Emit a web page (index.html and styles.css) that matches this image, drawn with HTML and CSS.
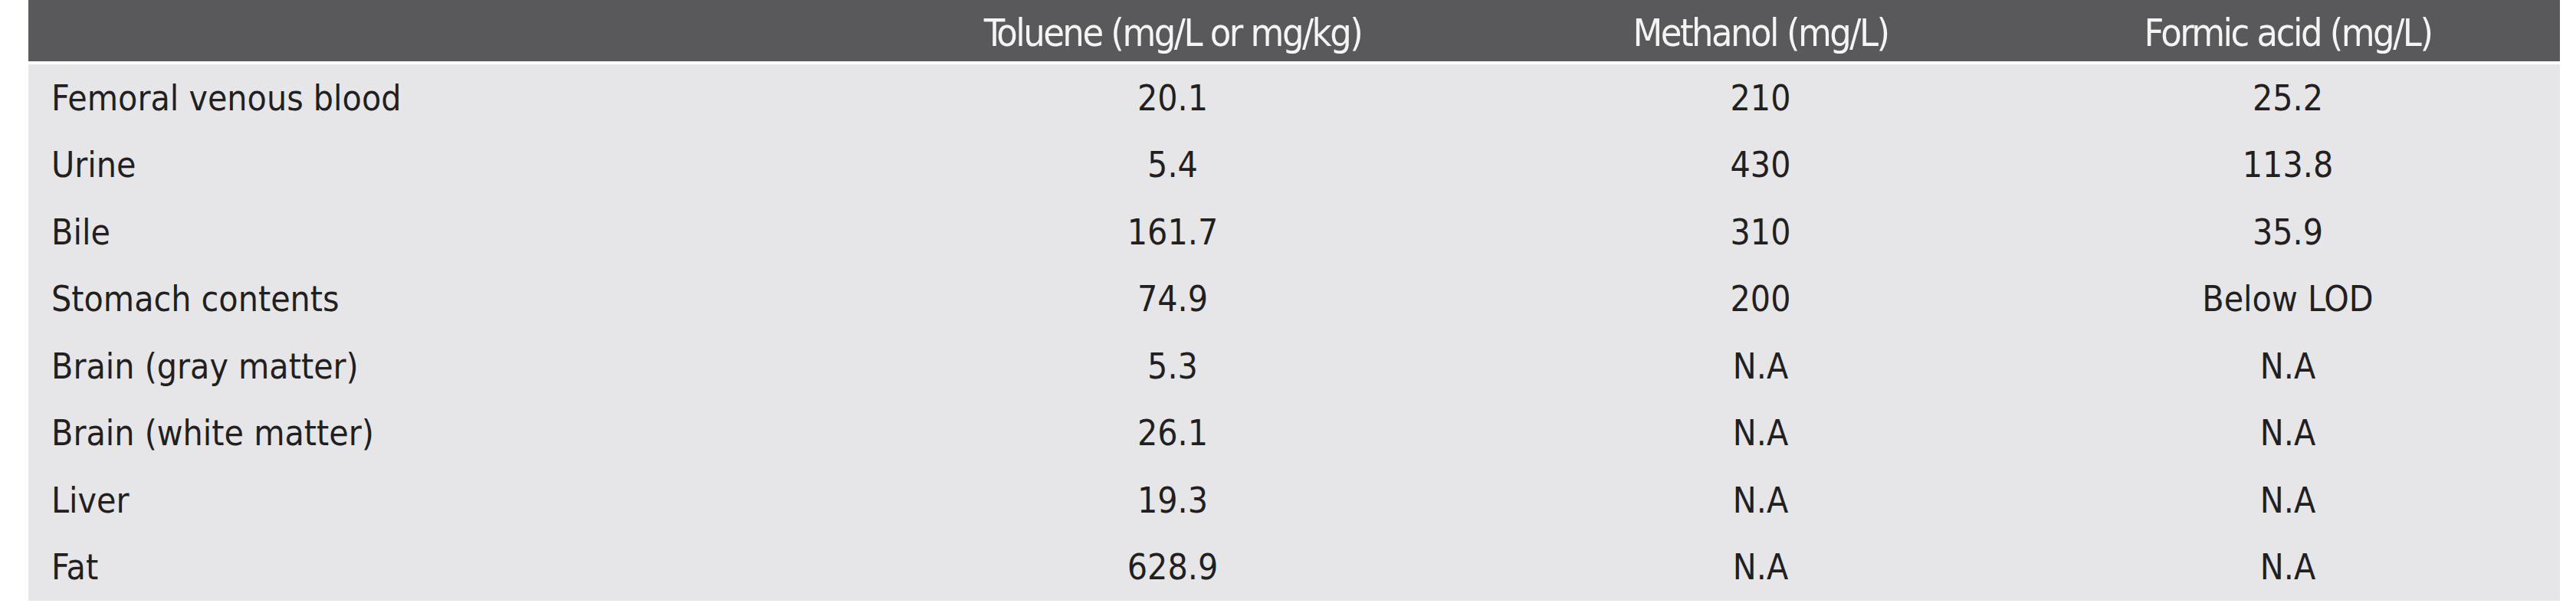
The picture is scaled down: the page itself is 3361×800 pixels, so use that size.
FILE: index.html
```html
<!DOCTYPE html>
<html>
<head>
<meta charset="utf-8">
<link rel="stylesheet" href="styles.css">
</head>
<body>
<table class="data">
  <colgroup>
    <col class="c-label">
    <col class="c-tol">
    <col class="c-meth">
    <col class="c-form">
  </colgroup>
  <thead>
    <tr class="head-row">
      <th class="label"></th>
      <th>Toluene (mg/L or mg/kg)</th>
      <th>Methanol (mg/L)</th>
      <th>Formic acid (mg/L)</th>
    </tr>
  </thead>
  <tbody>
    <tr><td class="label">Femoral venous blood</td><td>20.1</td><td>210</td><td>25.2</td></tr>
    <tr><td class="label">Urine</td><td>5.4</td><td>430</td><td>113.8</td></tr>
    <tr><td class="label">Bile</td><td>161.7</td><td>310</td><td>35.9</td></tr>
    <tr><td class="label">Stomach contents</td><td>74.9</td><td>200</td><td>Below LOD</td></tr>
    <tr><td class="label">Brain (gray matter)</td><td>5.3</td><td>N.A</td><td>N.A</td></tr>
    <tr><td class="label">Brain (white matter)</td><td>26.1</td><td>N.A</td><td>N.A</td></tr>
    <tr><td class="label">Liver</td><td>19.3</td><td>N.A</td><td>N.A</td></tr>
    <tr><td class="label">Fat</td><td>628.9</td><td>N.A</td><td>N.A</td></tr>
  </tbody>
</table>
</body>
</html>
```
FILE: styles.css
```css
html, body {
  margin: 0;
  padding: 0;
  background: #ffffff;
}

body {
  padding-left: 37px;
  font-family: "DejaVu Sans Condensed", "DejaVu Sans", sans-serif;
  font-stretch: semi-condensed;
}

.data {
  border-collapse: collapse;
  table-layout: fixed;
  width: 3303px;
}

.c-label { width: 1059px; }
.c-tol { width: 868px; }
.c-meth { width: 666px; }
.c-form { width: 710px; }

.head-row {
  height: 82px;
}

.data th {
  padding: 5px 0 0 0;
  background: #59595b;
  color: #f4f4f4;
  font-weight: normal;
  font-size: 50px;
  letter-spacing: -2.5px;
  text-align: center;
  vertical-align: middle;
  border-bottom: 4px solid #ffffff;
  white-space: nowrap;
}

.data td {
  height: 87.5px;
  padding: 0;
  background: #e6e6e8;
  color: #231f20;
  font-size: 46px;
  text-align: center;
  vertical-align: middle;
  white-space: nowrap;
}

.data td.label {
  text-align: left;
  padding-left: 30px;
}
```
